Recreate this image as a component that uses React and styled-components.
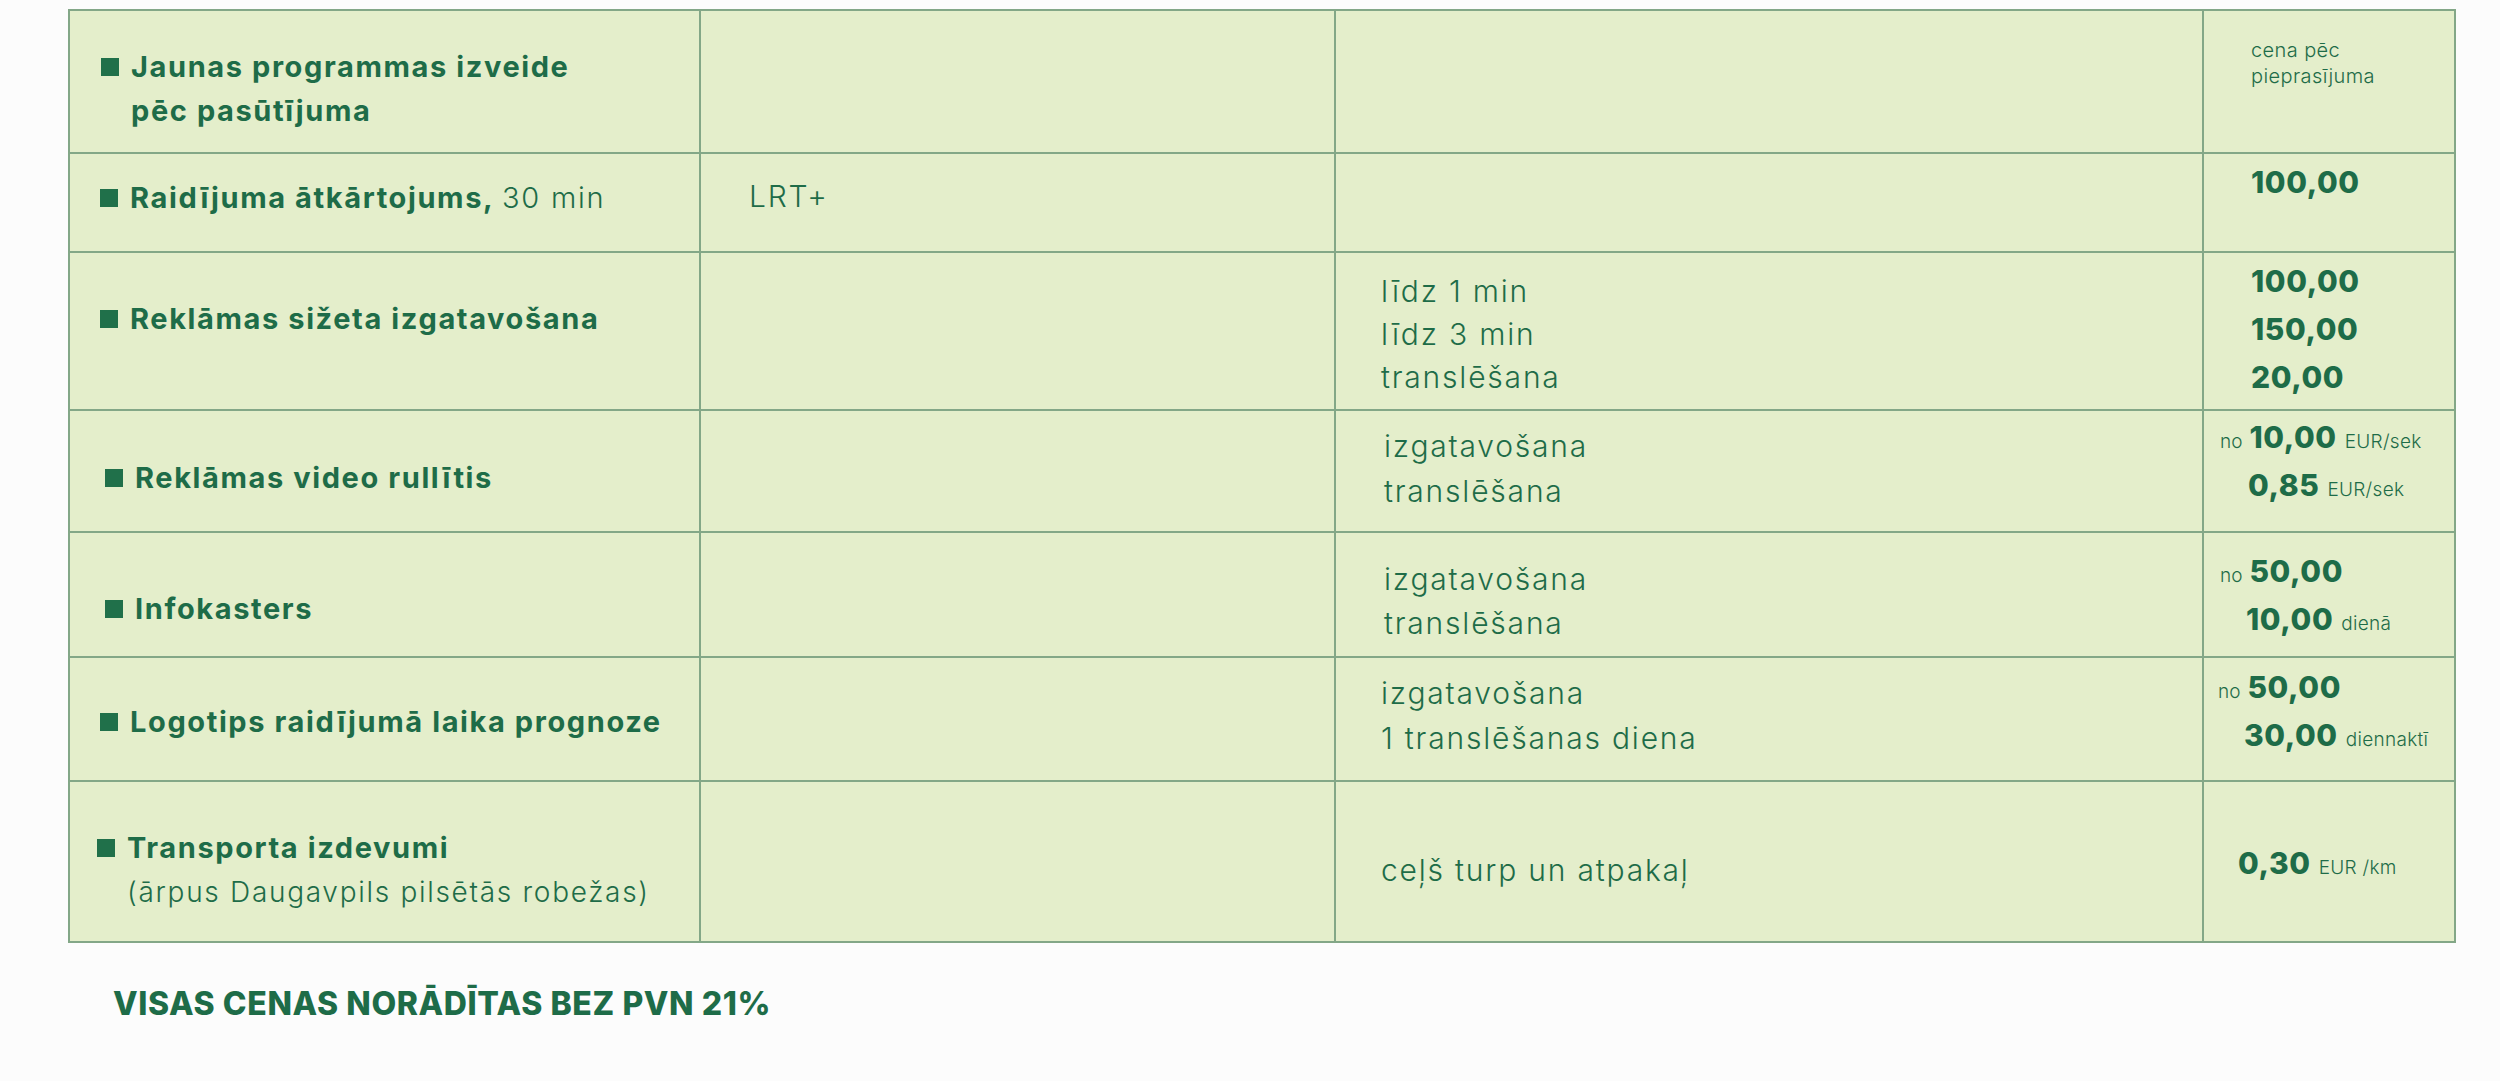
import styled, { createGlobalStyle } from 'styled-components';

const GlobalStyle = createGlobalStyle`
  html, body {
    margin: 0;
    padding: 0;
    background: #fcfcfc;
  }
  body {
    font-family: Inter, 'Noto Sans', sans-serif;
    color: #1e6c48;
  }
`;

const Page = styled.div`
  width: 2500px;
  height: 1081px;
  padding: 9px 0 0 68px;
  box-sizing: border-box;
  overflow: hidden;
`;

// 价目表
const PriceTable = styled.div`
  width: 2388px;
  box-sizing: border-box;
  border: 2px solid #83a787;
  background: #e4eecb;
  display: flex;
  flex-direction: column;
`;

const Row = styled.div`
  display: grid;
  grid-template-columns: 629px 635px 868px 1fr;
  height: ${p => p.$h}px;
  box-sizing: border-box;
  border-top: ${p => (p.$first ? 'none' : '2px solid #83a787')};
`;

const Cell = styled.div`
  box-sizing: border-box;
  border-left: ${p => (p.$first ? 'none' : '2px solid #83a787')};
  padding-top: ${p => p.$top || 0}px;
  padding-left: ${p => p.$left || 0}px;
`;

// 第一列：服务名称
const ServiceCell = styled(Cell)`
  display: flex;
  align-items: flex-start;
  gap: 12px;
`;

const Bullet = styled.span`
  flex-shrink: 0;
  width: 18px;
  height: 18px;
  margin-top: 13px;
  background: #20704a;
`;

const ServiceText = styled.div`
  font-size: 29px;
  line-height: 44px;
  font-weight: 700;
  letter-spacing: 1.6px;
  white-space: nowrap;
`;

const Thin = styled.span`
  font-size: 29px;
  font-weight: 300;
  letter-spacing: 1.8px;
`;

const SubLine = styled.div`
  font-size: 28px;
  font-weight: 300;
  line-height: 45px;
  letter-spacing: 1.7px;
`;

// 中间列：说明
const DetailText = styled.div`
  font-size: 30px;
  line-height: ${p => p.$lh || 44}px;
  font-weight: 300;
  letter-spacing: 1.8px;
  white-space: nowrap;
`;

// 最后一列：价格
const PriceLine = styled.div`
  padding-left: ${p => p.$indent || 0}px;
  line-height: 43px;
  white-space: nowrap;
`;

const From = styled.span`
  font-size: 19px;
  font-weight: 300;
  margin-right: 7px;
`;

const Amount = styled.span`
  font-size: 30px;
  font-weight: 800;
  letter-spacing: 0.6px;
`;

const Unit = styled.span`
  font-size: 19px;
  font-weight: 300;
  margin-left: 8px;
  letter-spacing: 0.3px;
`;

const Note = styled.div`
  padding-left: ${p => p.$indent || 0}px;
  font-size: 20px;
  line-height: 26px;
  font-weight: 300;
  letter-spacing: 0.4px;
`;

const Footer = styled.div`
  margin: 41px 0 0 45px;
  font-size: 32px;
  line-height: 40px;
  font-weight: 800;
  letter-spacing: 0.6px;
`;

const Name = ({ top, left, children }) => (
  <ServiceCell $first $top={top} $left={left}>
    <Bullet />
    <ServiceText>{children}</ServiceText>
  </ServiceCell>
);

const Price = ({ indent, from, amount, unit }) => (
  <PriceLine $indent={indent}>
    {from && <From>no</From>}
    <Amount>{amount}</Amount>
    {unit && <Unit>{unit}</Unit>}
  </PriceLine>
);

export default function App() {
  return (
    <Page>
      <GlobalStyle />
      <PriceTable>
        <Row $first $h={141}>
          <Name top={34} left={31}>
            Jaunas programmas izveide
            <br />
            pēc pasūtījuma
          </Name>
          <Cell />
          <Cell />
          <Cell $top={26} $left={14}>
            <Note $indent={33}>cena pēc</Note>
            <Note $indent={33}>pieprasījuma</Note>
          </Cell>
        </Row>

        <Row $h={99}>
          <Name top={22} left={30}>
            Raidījuma ātkārtojums, <Thin>30 min</Thin>
          </Name>
          <Cell $top={20} $left={48}>
            <DetailText>LRT+</DetailText>
          </Cell>
          <Cell />
          <Cell $top={7} $left={14}>
            <Price indent={33} amount="100,00" />
          </Cell>
        </Row>

        <Row $h={158}>
          <Name top={44} left={30}>Reklāmas sižeta izgatavošana</Name>
          <Cell />
          <Cell $top={17} $left={45}>
            <DetailText $lh={43}>līdz 1 min</DetailText>
            <DetailText $lh={43}>līdz 3 min</DetailText>
            <DetailText $lh={43}>translēšana</DetailText>
          </Cell>
          <Cell $top={7} $left={14}>
            <Price indent={33} amount="100,00" />
            <Price indent={33} amount="150,00" />
            <Price indent={33} amount="20,00" />
          </Cell>
        </Row>

        <Row $h={122}>
          <Name top={45} left={35}>Reklāmas video rullītis</Name>
          <Cell />
          <Cell $top={13} $left={48}>
            <DetailText $lh={45}>izgatavošana</DetailText>
            <DetailText $lh={45}>translēšana</DetailText>
          </Cell>
          <Cell $top={5} $left={14}>
            <Price indent={2} from amount="10,00" unit="EUR/sek" />
            <Price indent={30} amount="0,85" unit="EUR/sek" />
          </Cell>
        </Row>

        <Row $h={125}>
          <Name top={54} left={35}>Infokasters</Name>
          <Cell />
          <Cell $top={24} $left={48}>
            <DetailText>izgatavošana</DetailText>
            <DetailText>translēšana</DetailText>
          </Cell>
          <Cell $top={17} $left={14}>
            <Price indent={2} from amount="50,00" />
            <Price indent={28} amount="10,00" unit="dienā" />
          </Cell>
        </Row>

        <Row $h={124}>
          <Name top={42} left={30}>Logotips raidījumā laika prognoze</Name>
          <Cell />
          <Cell $top={13} $left={45}>
            <DetailText $lh={45}>izgatavošana</DetailText>
            <DetailText $lh={45}>1 translēšanas diena</DetailText>
          </Cell>
          <Cell $top={8} $left={14}>
            <Price indent={0} from amount="50,00" />
            <Price indent={26} amount="30,00" unit="diennaktī" />
          </Cell>
        </Row>

        <Row $h={161}>
          <Name top={44} left={27}>
            Transporta izdevumi
            <SubLine>(ārpus Daugavpils pilsētās robežas)</SubLine>
          </Name>
          <Cell />
          <Cell $top={66} $left={45}>
            <DetailText>ceļš turp un atpakaļ</DetailText>
          </Cell>
          <Cell $top={60} $left={14}>
            <Price indent={20} amount="0,30" unit="EUR /km" />
          </Cell>
        </Row>
      </PriceTable>

      <Footer>VISAS CENAS NORĀDĪTAS BEZ PVN 21%</Footer>
    </Page>
  );
}
